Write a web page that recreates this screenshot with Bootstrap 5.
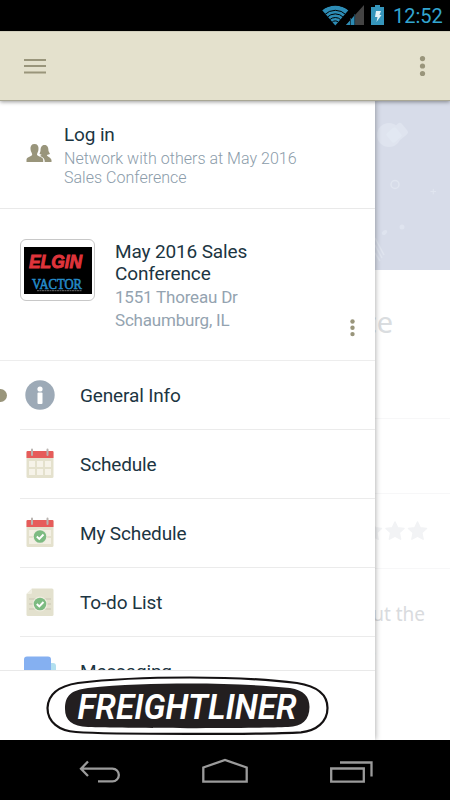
<!DOCTYPE html>
<html lang="en">
<head>
<meta charset="utf-8">
<meta name="viewport" content="width=device-width, initial-scale=1">
<title>May 2016 Sales Conference</title>
<link href="https://cdn.jsdelivr.net/npm/bootstrap@5.3.0/dist/css/bootstrap.min.css" rel="stylesheet">
<style>
body{font-family:Roboto,"Liberation Sans",sans-serif;color:#1c3542;background:#fff}
svg{display:block;flex:none}
.screen{width:450px;height:800px}
.status{height:31px;background:#000;color:#33a5d0;font-size:20px;line-height:32px;padding-right:8px}
.clock{width:49px;height:31px}
.appbar{height:70px;background:#e4e1cd;border-bottom:1px solid #a9a795;border-top:1px solid #d2cfbd;box-shadow:0 1px 4px rgba(0,0,0,.4);z-index:3;padding:0 22px 0 23px}
.drawer{width:375px;z-index:2;box-shadow:0 0 6px rgba(0,0,0,.38)}
.login{height:108px;border-bottom:1px solid #e9e9e9;padding:23px 0 0 26px}
.login-icon{margin-top:19px}
.login-text{margin-left:11px}
.t-main,.entry-label{font-size:19px;line-height:22px;font-weight:400;letter-spacing:-.14px}
.t-sub{font-size:16px;line-height:19px;color:#8b9caa;font-weight:300;margin-top:3px;letter-spacing:.02px}
.event{height:152px;border-bottom:1px solid #ededed;padding:30px 0 0 20px}
.event-logo{width:75px;height:62px;border:1px solid #c8c8c8;border-radius:6px}
.event-text{margin-left:20px;padding-top:2px;width:210px}
.t-addr{font-size:17px;line-height:22.5px;color:#94a3b0;font-weight:400;letter-spacing:-.2px;margin-top:1px}
.event-dots{margin:79px 19px 0 auto}
.entries{min-height:0;flex-basis:0}
.entry{height:69px}
.entry-in{margin-left:20px;border-bottom:1px solid #ebebeb;height:69px}
.entry-label{margin-left:20px;padding-top:2px}
.marker{width:13px;height:13px;left:-6px;top:28px;background:#99957b}
.sponsor{height:70px;border-top:1px solid #e9e9e9}
.hero{height:169px;background:#d7dce9}
.page-title{height:149px;padding:33px 57px 0 0;border-bottom:1px solid #f7f7f8;font:29px/37px "Noto Sans",sans-serif;color:#dadde0}
.page-gap{height:75px;border-bottom:1px solid #f7f7f8}
.stars{height:75px;border-bottom:1px solid #f7f7f8;padding-right:21px}
.about{padding:28px 25px 0 0;font:19px/34px "Noto Sans",sans-serif;color:#d9dbde}
.about-end{padding-right:49px}
.softkeys{height:60px;background:#000;z-index:4}
</style>
</head>
<body>
<div class="screen d-flex flex-column position-relative overflow-hidden">
  <div class="status d-flex justify-content-end flex-shrink-0">
    <svg width="71" height="31" viewBox="322 0 71 31">
      <defs><clipPath id="fan"><path d="M335.300 25.500L322 10Q335 1 348.600 10Z"/></clipPath></defs>
      <g clip-path="url(#fan)"><circle cx="335.300" cy="25.500" r="20" fill="#2d8cb5"/>
      <g fill="none" stroke="#000" stroke-width="1"><circle cx="335.300" cy="25.500" r="15.200"/><circle cx="335.300" cy="25.500" r="11.600"/><circle cx="335.300" cy="25.500" r="8"/><circle cx="335.300" cy="25.500" r="4.600"/></g></g>
      <path d="M346 25L364 5V25Z" fill="#444"/><path d="M346 25L355 15V25Z" fill="#2d8cb5"/><path d="M350.500 18V25M354.700 14V25" stroke="#173e50"/>
      <path d="M371 7h4V5h5v2h4v18h-13z" fill="#3595bb"/><path d="M376 11h5l-1.500 4h2l-5 7 1-5h-2.500z" fill="#e4f2f7"/>
    </svg>
    <span class="clock flex-shrink-0">12:52</span>
  </div>
  <header class="appbar d-flex flex-shrink-0 align-items-center justify-content-between position-relative">
    <svg width="24" height="18" viewBox="0 0 24 18" stroke="#99957b" stroke-width="2"><path d="M1 3H23M1 9H23M1 15.500H23"/></svg>
    <svg width="11" height="24" viewBox="0 0 11 24" fill="#99957b"><circle cx="5.500" cy="4.600" r="2.600"/><circle cx="5.500" cy="12" r="2.600"/><circle cx="5.500" cy="19.500" r="2.600"/></svg>
  </header>

  <main class="position-relative flex-fill overflow-hidden">
    <div class="page-body">
      <div class="hero d-flex justify-content-end">
        <svg width="75" height="169" viewBox="375 101 75 169">
          <g fill="#dfe4ef"><circle cx="389" cy="135" r="12"/><rect x="393" y="124" width="13" height="14" rx="3" transform="rotate(-40 400 131)"/><rect x="388" y="129" width="12" height="12" rx="2" transform="rotate(-40 394 135)" fill="#e2e8f2"/><circle cx="402" cy="227" r="2.500"/><ellipse cx="384.500" cy="232.500" rx="3" ry="2" transform="rotate(-35 384.500 232.500)"/></g>
          <g fill="none" stroke="#e0e5ef"><circle cx="395" cy="184.500" r="4" stroke-width="1.500"/><path d="M430.500 191.500h5.500M433.300 188.800v5.500"/><path d="M375 238l9 17M375 245l7 13M375 253l5 8" stroke-width="1.500"/></g>
        </svg>
      </div>
      <div class="page-title text-end">Conference</div>
      <div class="page-gap"></div>
      <div class="stars d-flex align-items-center justify-content-end">
        <svg width="66" height="22" viewBox="363 520 66 22" fill="#f2f3f5" stroke="#f2f3f5" stroke-width="1.500" stroke-linejoin="round"><defs><path id="star" d="M0-9L2.700-3.200L9-2.500L4.300 1.700L5.600 8.200L0 5L-5.600 8.200L-4.300 1.700L-9-2.500L-2.700-3.200Z"/></defs><use href="#star" x="372.500" y="531"/><use href="#star" x="395" y="531"/><use href="#star" x="417.500" y="531"/></svg>
      </div>
      <div class="about text-end"><div>Find out the</div><div class="about-end">conference.</div></div>
    </div>

    <nav class="drawer bg-white position-absolute top-0 start-0 h-100 d-flex flex-column">
      <section class="login d-flex flex-shrink-0">
        <svg class="login-icon" width="27" height="20" viewBox="27 143 27 20" fill="#99957b"><path d="M35.500 144C38.500 144 39.800 146 39.500 149C39.400 152 38 153 38 154.500C38.300 156.500 43.700 156.500 44.200 159.500V162H27.500V159.500C28 156.500 33 156.500 33.200 154.500C33.200 153 31.700 152 31.500 149C31.200 146 32.500 144 35.500 144Z"/><path d="M45.500 145C48.500 145 49.500 147.500 49.500 151L51 154L47.800 155C48.500 157 52 157.500 52.500 160V162H45.700C46 158.500 43.500 157 41 156L42.700 154.700L40.500 154L41.500 151C41.500 147.500 42.500 145 45.500 145Z"/></svg>
        <div class="login-text"><div class="t-main">Log in</div><div class="t-sub">Network with others at May 2016<br>Sales Conference</div></div>
      </section>
      <section class="event d-flex flex-shrink-0">
        <div class="event-logo d-flex align-items-center justify-content-center">
          <svg width="68" height="47" viewBox="0 0 68 47"><path d="M0 0H68V47H0Z"/><text x="5" y="21" font-family="Liberation Sans" font-weight="bold" font-style="italic" font-size="18.500" fill="#df343b" stroke="#df343b" stroke-width="1" textLength="53" lengthAdjust="spacingAndGlyphs">ELGiN</text><text x="8" y="42" font-family="Liberation Serif" font-size="15" fill="#258bc9" stroke="#258bc9" stroke-width=".6" textLength="50" lengthAdjust="spacingAndGlyphs">VACTOR</text><path d="M13 43.700H58" stroke="#888" stroke-width=".8" stroke-dasharray="2 .5"/></svg>
        </div>
        <div class="event-text"><div class="t-main">May 2016 Sales<br>Conference</div><div class="t-addr">1551 Thoreau Dr<br>Schaumburg, IL</div></div>
        <svg class="event-dots" width="7" height="20" viewBox="0 0 7 20" fill="#99957b"><circle cx="3.500" cy="3.500" r="2.200"/><circle cx="3.500" cy="9.800" r="2.200"/><circle cx="3.500" cy="16.100" r="2.200"/></svg>
      </section>
      <div class="entries flex-fill overflow-hidden">
        <div class="entry position-relative"><span class="marker position-absolute rounded-circle"></span>
          <div class="entry-in d-flex align-items-center"><svg width="40" height="40" viewBox="0 0 40 40"><circle cx="20" cy="20" r="14.700" fill="#9daab7"/><circle cx="20" cy="14" r="2.600" fill="#fff"/><rect x="17.500" y="17.500" width="5" height="11.500" rx="1" fill="#fff"/></svg><span class="entry-label">General Info</span></div></div>
        <div class="entry"><div class="entry-in d-flex align-items-center"><svg width="40" height="40" viewBox="0 0 40 40"><defs><g id="cal"><rect x="6.500" y="7" width="27" height="27" rx="1.500" fill="#e4e1cd"/><path d="M6.500 14V8Q6.500 7 7.500 7H32.500Q33.500 7 33.500 8V14Z" fill="#e65c5a"/><path d="M12 5.500V11M27.500 5.500V11" stroke="#b9b4b0" stroke-width="2" stroke-linecap="round"/></g></defs><use href="#cal"/><path d="M9 17h6v6H9zM17 17h6v6h-6zM25 17h6v6h-6zM9 25h6v6H9zM17 25h6v6h-6zM25 25h6v6h-6z" fill="#f6f3e9"/></svg><span class="entry-label">Schedule</span></div></div>
        <div class="entry"><div class="entry-in d-flex align-items-center"><svg width="40" height="40" viewBox="0 0 40 40"><use href="#cal"/><path d="M9 17H31V23H9ZM9 25H31V31H9Z" fill="#f3f0e4"/><g id="tick"><circle cx="20" cy="23.500" r="7.500" fill="#efecdf"/><circle cx="20" cy="23.500" r="6.300" fill="#7dbb82"/><path d="M16.800 23.500L19.300 26L23.500 21.500" fill="none" stroke="#fff" stroke-width="1.900"/></g></svg><span class="entry-label">My Schedule</span></div></div>
        <div class="entry"><div class="entry-in d-flex align-items-center"><svg width="40" height="40" viewBox="0 0 40 40"><path d="M12 6.500H32Q33.500 6.500 33.500 8V32.500Q33.500 34 32 34H8Q6.500 34 6.500 32.500V12Z" fill="#e3e1ce"/><path d="M6.500 12L12 6.500V10.500Q12 12 10.500 12Z" fill="#f0eee2"/><path d="M9 17H31M9 22H31M9 27H31" stroke="#c9c6b2" stroke-width="1.200"/><use href="#tick" y="-1.500"/></svg><span class="entry-label">To-do List</span></div></div>
        <div class="entry"><div class="entry-in d-flex align-items-center"><svg width="40" height="40" viewBox="0 0 40 40"><rect x="12" y="12" width="24" height="20" rx="3" fill="#b3e0ef"/><rect x="4" y="5.500" width="27" height="23" rx="3" fill="#85b0f1"/></svg><span class="entry-label">Messaging</span></div></div>
      </div>
      <div class="sponsor flex-shrink-0">
        <svg width="375" height="69" viewBox="0 671 375 69">
          <path d="M47.500 708C48 694 59 686 78 683C110 679 150 677.500 190 677.500C230 677.500 265 679 297 683C316 686 327.500 694 327.500 708C327.500 722 316 731 301 732.300C265 734.500 110 734.500 76 732C59 731 47.500 722 47.500 708Z" fill="#fff" stroke="#141112" stroke-width="2.200"/>
          <path d="M65 709C65 695 72 690 88 688C120 684.500 155 683.500 190 683.500C225 683.500 260 685 290 688C304 690 309.500 697 309.500 707C309.500 720 302 726.500 288 727C255 728.500 120 728.500 88 727C72 726.500 65 720 65 709Z" fill="#231f20"/>
          <text x="77.500" y="719" font-family="Roboto, Liberation Sans" font-weight="600" font-style="italic" font-size="34.500" fill="#fff" textLength="219" lengthAdjust="spacingAndGlyphs">FREIGHTLINER</text>
        </svg>
      </div>
    </nav>
  </main>

  <footer class="softkeys flex-shrink-0">
    <svg width="450" height="60" viewBox="0 740 450 60" fill="none" stroke="#9b9b9b" stroke-width="2.300"><path d="M88 761.500L81 768.700L88 776M81 768.700H112.500A6.300 6.300 0 0 1 112.500 781.400H98"/><path d="M203.300 781.700V767.500L225 760L246.700 767.500V781.700Z"/><path d="M331.200 768.500H363.800V781.700H331.200ZM340 762.500H371.500V776.500"/></svg>
  </footer>
</div>
<script src="https://cdn.jsdelivr.net/npm/bootstrap@5.3.0/dist/js/bootstrap.bundle.min.js"></script>
</body>
</html>
